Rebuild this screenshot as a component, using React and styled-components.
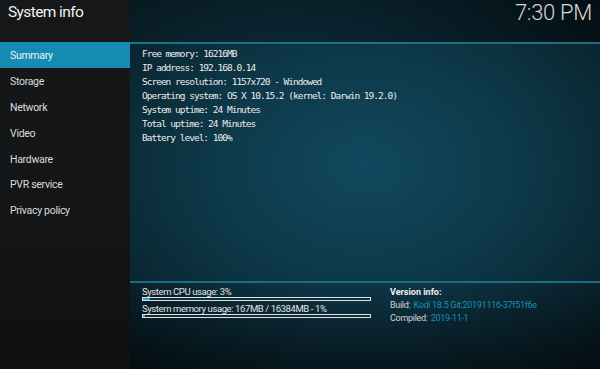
import React from "react";
import styled, { createGlobalStyle } from "styled-components";

const GlobalStyle = createGlobalStyle`
  html, body {
    margin: 0;
    padding: 0;
    width: 600px;
    height: 369px;
    overflow: hidden;
    background: #061419;
  }
`;

const Screen = styled.div`
  display: grid;
  grid-template-columns: 130px 1fr;
  width: 600px;
  height: 369px;
  font-family: "Roboto", "Noto Sans", sans-serif;
  color: #e6e6e6;
`;

const Sidebar = styled.div`
  display: flex;
  flex-direction: column;
  background: linear-gradient(180deg, #151719 0%, #131517 60%, #0f1011 100%);
`;

const Title = styled.div`
  height: 42px;
  padding: 2px 0 0 8px;
  box-sizing: border-box;
  font-size: 15.5px;
  letter-spacing: -0.6px;
  color: #f2f2f2;
  line-height: 20px;
`;

const MenuItem = styled.div`
  height: 25.8px;
  display: flex;
  align-items: center;
  padding: 2px 0 0 10px;
  box-sizing: border-box;
  font-size: 10.5px;
  letter-spacing: -0.3px;
  color: ${(p) => (p.active ? "#e8f4f8" : "#dcdcdc")};
  background: ${(p) => (p.active ? "#148bb2" : "transparent")};
  &:first-of-type {
    height: 27px;
  }
`;

const Main = styled.div`
  display: flex;
  flex-direction: column;
  background: radial-gradient(
    ellipse 75% 70% at 50% 45%,
    #14506a 0%,
    #0e3a4c 45%,
    #0a2530 75%,
    #06161c 100%
  );
`;

const Header = styled.div`
  height: 42px;
  display: flex;
  justify-content: flex-end;
  align-items: flex-start;
  padding-right: 8px;
  box-sizing: border-box;
  background: linear-gradient(90deg, rgba(6, 20, 26, 0.2), rgba(4, 12, 16, 0.75));
`;

const Clock = styled.div`
  font-size: 22px;
  font-weight: 300;
  letter-spacing: -0.3px;
  color: #d8d8d8;
  line-height: 26px;
`;

const InfoPanel = styled.div`
  flex: 1;
  border-top: 2px solid #1d6f88;
  background: rgba(10, 50, 65, 0.25);
  padding: 3px 0 0 12px;
  display: flex;
  flex-direction: column;
`;

const MonoLine = styled.div`
  font-family: "DejaVu Sans Mono", monospace;
  font-size: 9.5px;
  letter-spacing: -1px;
  line-height: 14px;
  color: #ececec;
`;

const BottomPanel = styled.div`
  height: 88px;
  border-top: 2px solid #1b6d85;
  display: flex;
  padding: 3px 0 0 12px;
  box-sizing: border-box;
  background: linear-gradient(180deg, rgba(6, 30, 40, 0.1), rgba(0, 0, 0, 0.35));
`;

const Usage = styled.div`
  width: 229px;
  display: flex;
  flex-direction: column;
`;

const UsageLabel = styled.div`
  font-size: 9.5px;
  letter-spacing: -0.4px;
  line-height: 11px;
  color: #e4e4e4;
`;

const Bar = styled.div`
  height: 2px;
  border: 1px solid #e0e0e0;
  background: #0c2f3c;
  margin-bottom: 2px;
`;

const Fill = styled.div`
  height: 100%;
  background: #2aa6d0;
`;

const Version = styled.div`
  margin-left: 19px;
  display: flex;
  flex-direction: column;
  font-size: 9px;
  line-height: 12.5px;
`;

const VersionTitle = styled.div`
  font-weight: 700;
  color: #f0f0f0;
  margin-bottom: 0.5px;
`;

const VersionRow = styled.div`
  color: #d4d4d4;
  letter-spacing: -0.3px;
`;

const Value = styled.span`
  color: #1c8fb6;
  margin-left: 3px;
`;

const menu = [
  "Summary",
  "Storage",
  "Network",
  "Video",
  "Hardware",
  "PVR service",
  "Privacy policy",
];

const info = [
  "Free memory: 16216MB",
  "IP address: 192.168.0.14",
  "Screen resolution: 1157x720 - Windowed",
  "Operating system: OS X 10.15.2 (kernel: Darwin 19.2.0)",
  "System uptime: 24 Minutes",
  "Total uptime: 24 Minutes",
  "Battery level: 100%",
];

export default function App() {
  return (
    <>
      <GlobalStyle />
      <Screen>
        <Sidebar>
          <Title>System info</Title>
          {menu.map((m, i) => (
            <MenuItem key={m} active={i === 0}>
              {m}
            </MenuItem>
          ))}
        </Sidebar>
        <Main>
          <Header>
            <Clock>7:30 PM</Clock>
          </Header>
          <InfoPanel>
            {info.map((l) => (
              <MonoLine key={l}>{l}</MonoLine>
            ))}
          </InfoPanel>
          <BottomPanel>
            <Usage>
              <UsageLabel>System CPU usage: 3%</UsageLabel>
              <Bar>
                <Fill style={{ width: "3%" }} />
              </Bar>
              <UsageLabel>System memory usage: 167MB / 16384MB - 1%</UsageLabel>
              <Bar>
                <Fill style={{ width: "1%" }} />
              </Bar>
            </Usage>
            <Version>
              <VersionTitle>Version info:</VersionTitle>
              <VersionRow>
                Build:<Value>Kodi 18.5 Git:20191116-37f51f6e</Value>
              </VersionRow>
              <VersionRow>
                Compiled:<Value>2019-11-1</Value>
              </VersionRow>
            </Version>
          </BottomPanel>
        </Main>
      </Screen>
    </>
  );
}
